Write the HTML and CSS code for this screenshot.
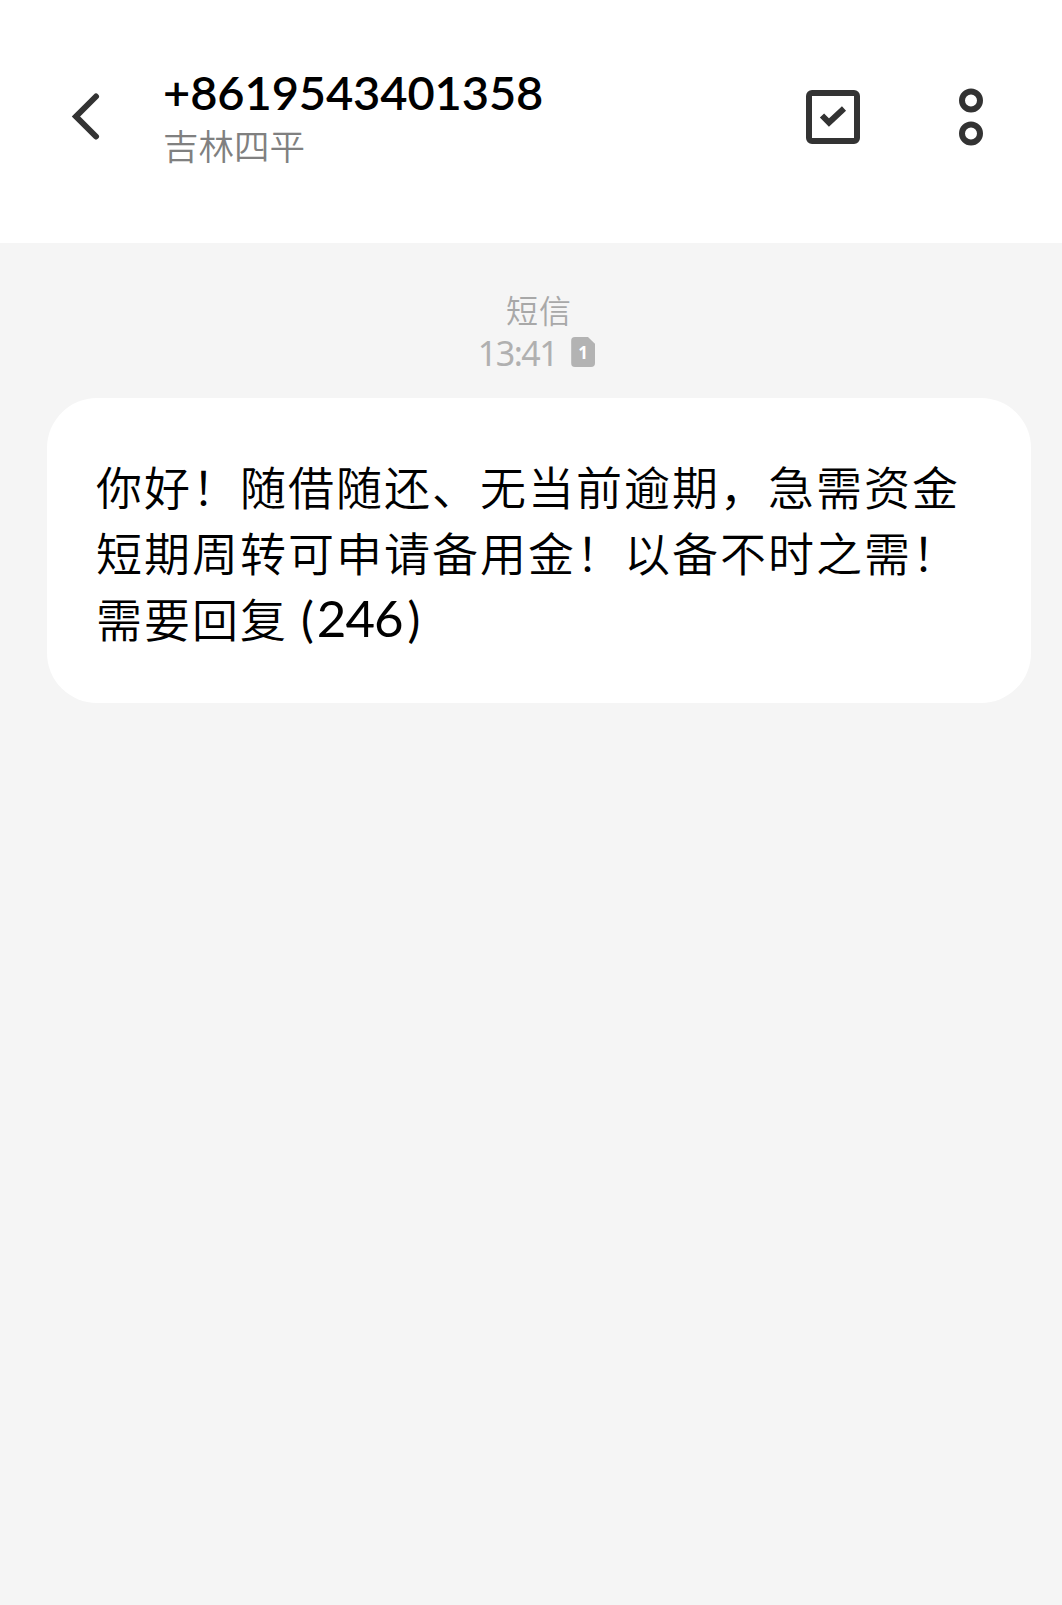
FILE: index.html
```html
<!DOCTYPE html>
<html lang="zh-CN">
<head>
  <meta charset="UTF-8" />
  <title>短信</title>
  <meta name="viewport" content="width=device-width, initial-scale=1.0" />
  <link rel="stylesheet" href="styles.css">
</head>
<body>
  <header class="header">
    <svg class="back" width="30" height="50" viewBox="0 0 30 50">
      <path d="M26 4.500L6 24.500L26 44.500" />
    </svg>
    <div class="contact">
      <h1 class="number">+8619543401358</h1>
      <div class="place">吉林四平</div>
    </div>
    <svg class="select" width="54" height="54" viewBox="0 0 54 54">
      <rect x="3" y="3" width="48" height="48" rx="3" />
      <path d="M16 25.500L23 32.500L38 18.500" />
    </svg>
    <svg class="more" width="24" height="58" viewBox="0 0 24 58">
      <circle cx="12" cy="12.500" r="9" />
      <circle cx="12" cy="45.500" r="9" />
    </svg>
  </header>

  <main class="thread">
    <div class="label">短信</div>
    <div class="meta">
      <span class="time">13:41</span>
      <span class="sim">1</span>
    </div>
    <div class="bubble">
      <div>你好！随借随还、无当前逾期，急需资金</div>
      <div>短期周转可申请备用金！以备不时之需！</div>
      <div>需要回复<span class="code"><span class="paren">(</span>246<span class="paren close">)</span></span></div>
    </div>
  </main>
</body>
</html>
```
FILE: styles.css
```css
* {
  box-sizing: border-box;
}
body {
  font-family: "Noto Sans", "Noto Sans CJK SC", sans-serif;
  background: #f5f5f5;
  color: #000;
  margin: 0;
}
.header {
  display: flex;
  align-items: flex-start;
  height: 243px;
  padding: 0 79px 0 70px;
  background: #fff;
}
.header svg {
  fill: none;
  stroke: #333;
  stroke-width: 6;
  stroke-linecap: round;
  flex: none;
}
.back {
  margin-top: 92px;
}
.contact {
  flex: 1;
  padding: 66px 0 0 63px;
}
.number {
  margin: 0;
  font-family: Lato, sans-serif;
  font-size: 47px;
  font-weight: 600;
  letter-spacing: -0.1px;
  line-height: 52px;
}
.place {
  font-family: "Noto Sans CJK SC", sans-serif;
  font-size: 35.500px;
  font-weight: 350;
  line-height: 54px;
  color: #808080;
}
.select {
  margin-top: 90px;
}
.header .select path {
  stroke-linecap: butt;
}
.more {
  margin: 88px 0 0 99px;
}
.thread {
  padding: 44px 31px 0 47px;
}
.label {
  font-family: "Noto Sans CJK SC", sans-serif;
  font-size: 32px;
  font-weight: 350;
  letter-spacing: 1px;
  line-height: 44px;
  color: #a8a8a8;
  text-align: center;
}
.meta {
  display: flex;
  justify-content: center;
  align-items: center;
  gap: 14px;
  height: 42px;
  padding-right: 5px;
  color: #b0b0b0;
}
.time {
  padding-top: 2px;
  font-size: 34px;
  font-weight: 400;
  letter-spacing: -1.5px;
}
.sim {
  width: 24px;
  height: 30px;
  border-radius: 4px;
  background: #b3b3b3;
  clip-path: polygon(0 0, 70% 0, 100% 23%, 100% 100%, 0 100%);
  color: #fff;
  font-size: 17px;
  font-weight: 700;
  line-height: 31px;
  text-align: center;
}
.bubble {
  height: 305px;
  margin-top: 25px;
  padding: 54px 49px;
  border-radius: 50px;
  background: #fff;
  font-family: "Noto Sans CJK SC", sans-serif;
  font-size: 46px;
  font-weight: 350;
  letter-spacing: 2px;
  line-height: 66px;
  white-space: nowrap;
}
.bubble div {
  height: 66px;
}
.code {
  margin-left: 13px;
  font-family: Lato, sans-serif;
  font-size: 51px;
  font-weight: 400;
  letter-spacing: -1px;
}
.paren {
  margin-right: 4px;
  font-size: 48px;
}
.close {
  margin-left: 5px;
}
```
